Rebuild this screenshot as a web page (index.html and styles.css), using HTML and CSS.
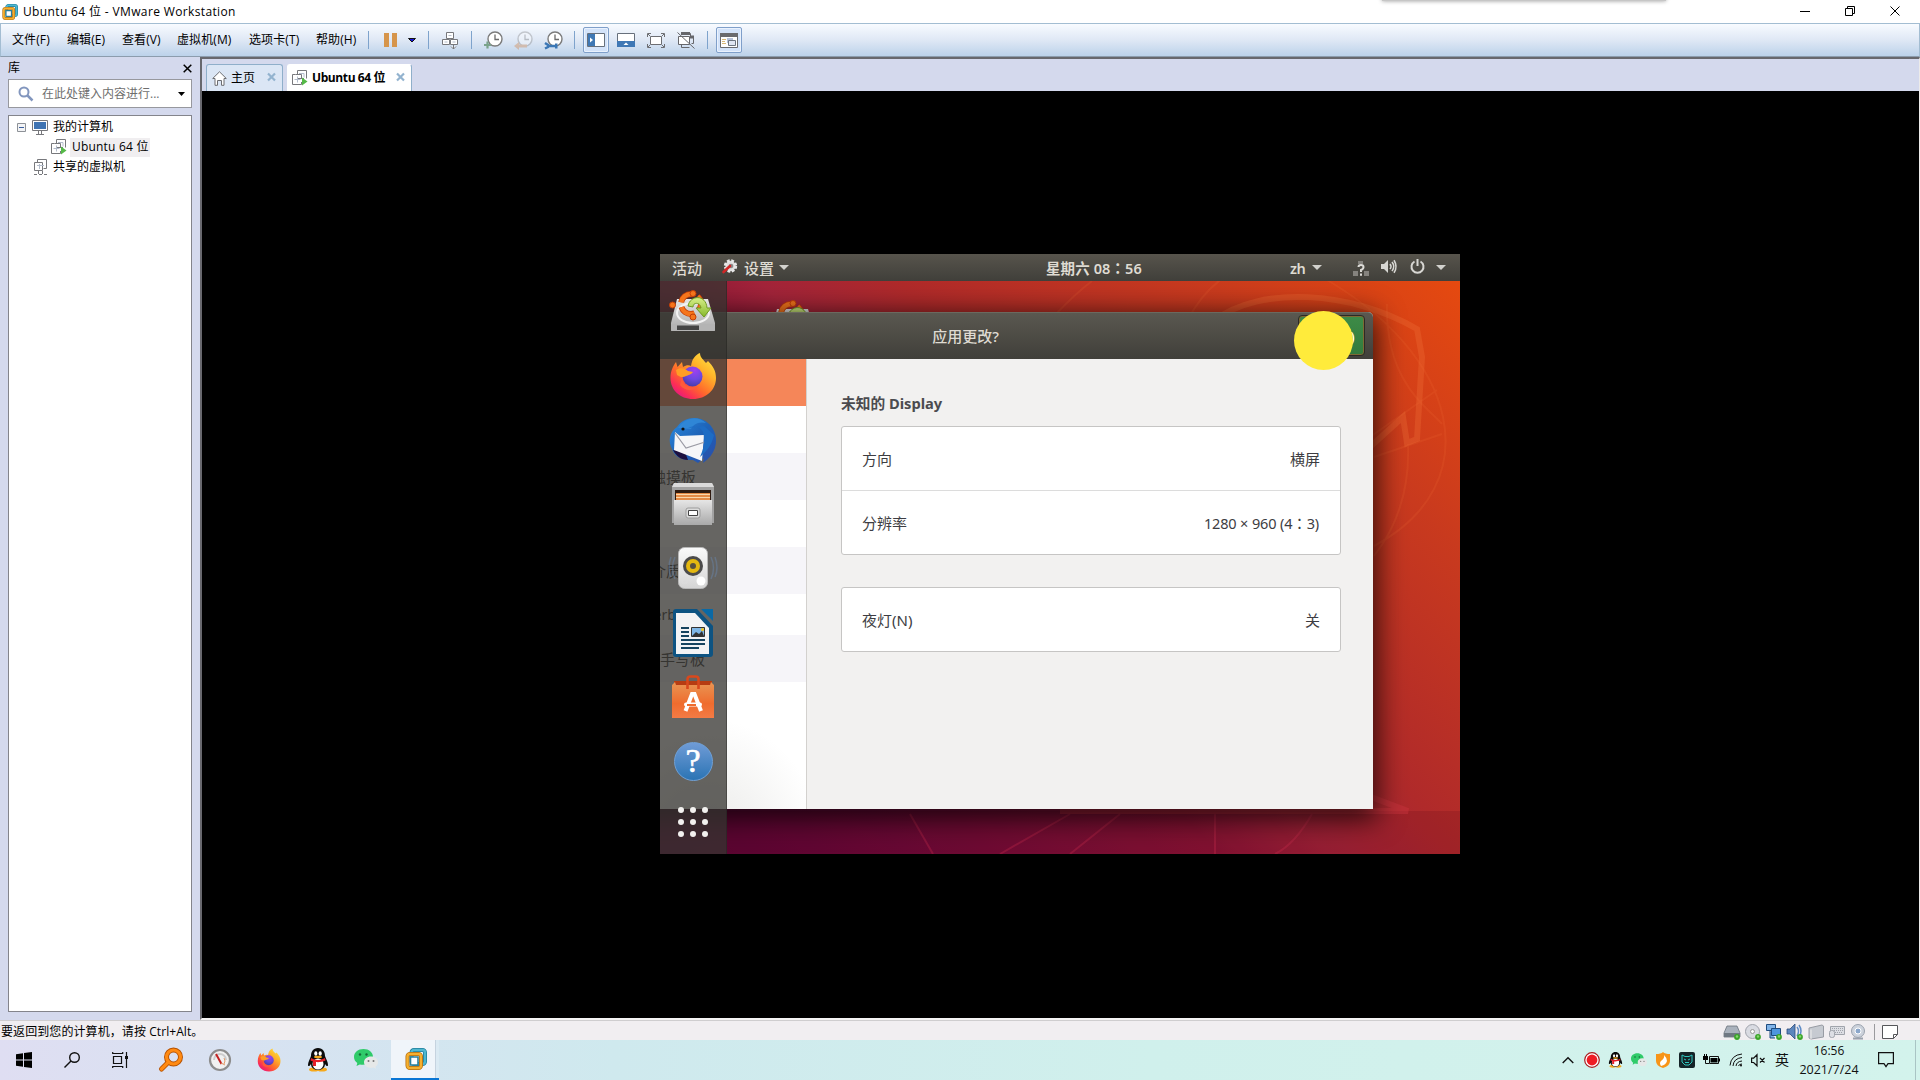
FILE: index.html
```html
<!DOCTYPE html>
<html lang="zh-CN">
<head>
<meta charset="utf-8">
<title>Ubuntu 64 位 - VMware Workstation</title>
<link rel="stylesheet" href="styles.css">
</head>
<body>
<svg class="defs" width="0" height="0" aria-hidden="true">
  <defs>
    <linearGradient id="g-metal" x1="0" y1="0" x2="0" y2="1"><stop offset="0" stop-color="#e6e6e6"/><stop offset="1" stop-color="#a9a9a9"/></linearGradient>
    <linearGradient id="g-fox" x1="1" y1="0" x2="0.2" y2="1"><stop offset="0" stop-color="#fff04a"/><stop offset=".35" stop-color="#ffb52a"/><stop offset=".65" stop-color="#ff6a2b"/><stop offset=".85" stop-color="#fb2f55"/><stop offset="1" stop-color="#e31587"/></linearGradient>
    <radialGradient id="g-globe" cx=".6" cy=".2" r=".9"><stop offset="0" stop-color="#a040f0"/><stop offset=".5" stop-color="#6c48e0"/><stop offset="1" stop-color="#403a9c"/></radialGradient>
    <linearGradient id="g-bird" x1="0" y1="0" x2="1" y2="1"><stop offset="0" stop-color="#2a8be0"/><stop offset=".5" stop-color="#1e63b8"/><stop offset="1" stop-color="#2b4da8"/></linearGradient>
    <linearGradient id="g-bag" x1="0" y1="0" x2="0" y2="1"><stop offset="0" stop-color="#e99654"/><stop offset=".6" stop-color="#ef6c2e"/><stop offset="1" stop-color="#f47b45"/></linearGradient>
    <linearGradient id="g-green" x1="0" y1="0" x2="0" y2="1"><stop offset="0" stop-color="#d8f08a"/><stop offset="1" stop-color="#86b92c"/></linearGradient>
    <linearGradient id="g-spk" x1="0" y1="0" x2="0" y2="1"><stop offset="0" stop-color="#fafafa"/><stop offset="1" stop-color="#d5d5d5"/></linearGradient>

    <symbol id="i-vmware" viewBox="0 0 22 22">
      <rect x="6.500" y="2" width="13.500" height="14" rx="2.500" fill="none" stroke="#1f7f9c" stroke-width="4"/>
      <rect x="6.500" y="2" width="13.500" height="14" rx="2.500" fill="none" stroke="#4fb7cf" stroke-width="2.400"/>
      <rect x="2.500" y="6" width="13.500" height="14" rx="2.500" fill="none" stroke="#b56d0e" stroke-width="4"/>
      <rect x="2.500" y="6" width="13.500" height="14" rx="2.500" fill="none" stroke="#f5b02e" stroke-width="2.400"/>
      <path d="M5.500 9h7.500v8H5.500z" fill="#fff" stroke="#2c7f99" stroke-width="1.600"/>
    </symbol>
    <symbol id="i-vm" viewBox="0 0 16 16">
      <path d="M5.500 4.500V.5h9v8M12 8.500H5.500" fill="none" stroke="#77787c"/>
      <path d="M3.500 4.500H.5v10h9V12M3.500 4.500h6v4" fill="none" stroke="#77787c"/>
      <path d="M7 3.500h5v4M2.500 9.500h6M5.500 6.500v6" fill="none" stroke="#b3bccb"/>
      <path d="M10 7.500l5.500 4-5.500 4z" fill="#55b948"/>
    </symbol>
    <symbol id="i-fox" viewBox="0 0 48 48">
      <path d="M24 47C11 47 1.500 38 1.500 26c0-7 2.500-12 5.500-16l1.500 5 4.500-5 1 5c3-2 6-2 8-1 1-7 4-11 9-13 0 5 4 7 6 10l2-2c5 5 8 10 8 17C47 38 37 47 24 47z" fill="url(#g-fox)"/>
      <circle cx="23.500" cy="24.500" r="10" fill="url(#g-globe)"/>
      <path d="M7 18c4-3 9-2 12 1l5 1c-2 3-5 3-7 4-3 2-6 1-9-1z" fill="#ff9d25"/>
      <path d="M13 25c0 9 9 13 17 9-4 5-14 6-19-1z" fill="#ff5b3a"/>
    </symbol>
    <symbol id="i-installer" viewBox="0 0 48 48">
      <path d="M8 12h31l7 24v7q0 1-1 1H3q-1 0-1-1v-7z" fill="url(#g-metal)"/>
      <path d="M2 37h44v6q0 1-1 1H3q-1 0-1-1z" fill="#b4b4b4"/><path d="M8 38.500h22v4.500H8z" fill="#444"/>
      <ellipse cx="24" cy="26" rx="16" ry="10" fill="none" stroke="#f3f3f3" stroke-width="2"/>
      <circle cx="22" cy="17" r="10" fill="none" stroke="#c33e06" stroke-width="6" stroke-dasharray="16 5" stroke-dashoffset="-12"/>
      <circle cx="22" cy="17" r="10" fill="none" stroke="#f5751c" stroke-width="4.500" stroke-dasharray="16 5" stroke-dashoffset="-12"/>
      <g fill="#f5751c" stroke="#c33e06"><circle cx="3.500" cy="18" r="3"/><circle cx="24" cy="6.500" r="3"/><circle cx="24" cy="30" r="3"/></g>
      <path d="M19 19c2-11 18-12 19 2h4l-7 9-8-9h5c-1-6-8-6-8-1z" fill="url(#g-green)" stroke="#6f9a20"/>
    </symbol>
    <symbol id="i-qq" viewBox="0 0 22 24">
      <ellipse cx="7" cy="21.500" rx="5" ry="2" fill="#f6a91c"/><ellipse cx="15" cy="21.500" rx="5" ry="2" fill="#f6a91c"/>
      <path d="M11 0c5 0 7 4 7 8 1 3 3 6 3 9 0 2-2 1-3-1 0 4-4 6-7 6s-7-2-7-6c-1 2-3 3-3 1 0-3 2-6 3-9 0-4 2-8 7-8z" fill="#0b0b0b"/>
      <ellipse cx="11" cy="16" rx="5.500" ry="5.500" fill="#fff"/>
      <ellipse cx="8.800" cy="5.500" rx="1.600" ry="2.300" fill="#fff"/><ellipse cx="13.200" cy="5.500" rx="1.600" ry="2.300" fill="#fff"/>
      <ellipse cx="11" cy="9" rx="4" ry="1.200" fill="#f6a91c"/>
      <path d="M4 10c4 2.500 10 2.500 14 0l.5 2.500c-3 1.500-7 2-9.500 1.600V18H6v-4.500l-2.500-1z" fill="#e5202b"/>
    </symbol>
    <symbol id="i-wechat" viewBox="0 0 24 20">
      <path d="M9.500 0C4 0 0 3.500 0 8c0 2.500 1.300 4.600 3.300 6L2.500 17l3.300-1.600C13 17 19 13 19 8c0-4.500-4-8-9.500-8z" fill="#2fcb6a"/>
      <circle cx="6" cy="5.500" r="1.200" fill="#146b38"/><circle cx="12.500" cy="5.500" r="1.200" fill="#146b38"/>
      <path d="M17 7.500c4 0 7 2.600 7 5.800 0 1.800-1 3.300-2.500 4.300l.5 2.200-2.500-1.200c-5 1.200-9.500-1.500-9.500-5.300 0-3.200 3-5.800 7-5.800z" fill="#e6e8e8"/>
      <circle cx="14.500" cy="12" r="1" fill="#777"/><circle cx="19.500" cy="12" r="1" fill="#777"/>
    </symbol>
    <symbol id="i-clock" viewBox="0 0 19 19">
      <circle cx="11" cy="8" r="7" fill="#fff" stroke="#7b7b7b" stroke-width="1.400"/><path d="M11 3.500V8.500h4" fill="none" stroke="#6c6c6c" stroke-width="1.300"/>
    </symbol>
    <symbol id="i-ok" viewBox="0 0 6 6"><circle cx="3" cy="3" r="2.900" fill="#3ba52a"/><circle cx="3" cy="2.500" r="1.200" fill="#86d66f"/></symbol>
  </defs>
</svg>

<header class="titlebar">
  <svg class="app-icon" width="16" height="16"><use href="#i-vmware"/></svg>
  <span class="app-title">Ubuntu 64 位 - VMware Workstation</span>
  <span class="top-strip"></span>
  <div class="win-buttons">
    <svg width="10" height="10"><path d="M0 5.500h10" stroke="#000"/></svg>
    <svg width="10" height="10"><path d="M.5 2.500h7v7h-7zM2.500 2.500v-2h7v7h-2" fill="none" stroke="#000"/></svg>
    <svg width="10" height="10"><path d="M.5.5l9 9M9.500.5l-9 9" stroke="#000"/></svg>
  </div>
</header>

<nav class="toolbar">
  <div class="menus">
    <span class="m2">文件(F)</span><span class="m2">编辑(E)</span><span class="m2">查看(V)</span><span class="m3">虚拟机(M)</span><span class="m4">选项卡(T)</span><span class="m2">帮助(H)</span>
  </div>
  <div class="tools">
    <i class="sep"></i>
    <svg class="pause" width="13" height="14"><path d="M0 0h5v14H0zM8 0h5v14H8z" fill="#d6954b"/></svg>
    <svg class="drop" width="8" height="5"><path d="M.5.5h7l-3.500 3.500z" fill="#1414d8" stroke="#111"/></svg>
    <i class="sep s1"></i>
    <svg class="t-cad" width="17" height="19" fill="#fff" stroke="#77787c"><path d="M4.500 1.500h7v6h-7zM.5 8.500h7v5h-7zM8.500 8.500h7v5h-7zM11.500 14v4M9 15.500l2.500 2.500 2.500-2.500"/><path d="M6.500 4.500h3M2.500 11h3M10.500 11h3" stroke="#b3bccb"/></svg>
    <i class="sep s2"></i>
    <svg class="t-clock" width="19" height="19"><use href="#i-clock"/><path d="M0 14h7M3.500 10.500v7" stroke="#7aa38b" stroke-width="2.200"/></svg>
    <svg class="t-clock" width="19" height="19"><g opacity=".35"><use href="#i-clock"/><path d="M13 15H4" stroke="#d07a38" stroke-width="3"/><path d="M0 15l5-4v8z" fill="#d07a38"/></g></svg>
    <svg class="t-clock" width="19" height="19"><use href="#i-clock"/><path d="M1 12l3 2v2l-3 1.500M4 15h8" stroke="#3b77b5" stroke-width="2.400" fill="none"/><path d="M11 12.500h2.500v5H11z" fill="#3b77b5"/></svg>
    <i class="sep s3"></i>
    <span class="toggle"><svg width="18" height="14"><path d="M.5.5h17v13H.5z" fill="#fff" stroke="#67707c"/><path d="M1 1h7v12H1z" fill="#3f78b5"/><path d="M3 4.500L6 7 3 9.500z" fill="#fff"/></svg></span>
    <svg class="t-a" width="18" height="14"><path d="M.5.5h17v13H.5z" fill="#fff" stroke="#67707c"/><path d="M0 8h18v6H0z" fill="#3f78b5"/><path d="M6.500 12L9 9.500l2.500 2.500z" fill="#fff"/></svg>
    <svg class="t-b" width="18" height="15" fill="none" stroke="#6d6e72"><path d="M3.500 3.500h11v8h-11z" fill="#fff"/><path d="M.5 4V.5H4M14 .5h3.500V4M17.500 11v3.500H14M4 14.500H.5V11M1 1l2 2M17 1l-2 2M1 14l2-2M17 14l-2-2"/></svg>
    <svg class="t-c" width="18" height="17" fill="none" stroke="#66676b"><path d="M5.500 1.500h8v3M13.500 4.500h3v7h-2M12.500 15.500h-8v-3" fill="none"/><path d="M1.500 4.500h11v8h-11z" fill="#fff"/><path d="M4 1.500h9M13 5h4" stroke-width="3"/><path d="M.5.500l17 16"/></svg>
    <i class="sep s4"></i>
    <span class="toggle"><svg width="18" height="15"><path d="M.5.5h17v14H.5z" fill="#fff" stroke="#6a6b6f"/><path d="M0 0h18v4H0z" fill="#6a6b6f"/><path d="M2 6.500h4M2 8.500h3M2 10.500h4" stroke="#d8b878"/><path d="M7 5h6v5H7z" fill="#b7c3dc"/><path d="M8.500 7.500h7v5h-7z" fill="#dfe5f2" stroke="#6d7580"/></svg></span>
  </div>
</nav>

<main class="workspace">
  <aside class="library">
    <div class="lib-head"><span>库</span><svg width="9" height="9"><path d="M.7.7l7.600 7.600M8.300.7L.7 8.300" stroke="#000" stroke-width="1.500"/></svg></div>
    <div class="search">
      <svg width="16" height="16"><circle cx="6" cy="6" r="4.500" fill="none" stroke="#8296be" stroke-width="2"/><path d="M9.500 9.500l5 5" stroke="#8296be" stroke-width="2.500"/></svg>
      <span>在此处键入内容进行...</span>
      <svg class="caret" width="7" height="4"><path d="M0 0h7L3.500 4z"/></svg>
    </div>
    <div class="tree">
      <div class="node n1"><svg class="exp" width="9" height="9"><path d="M.5.5h8v8h-8z" fill="#f3f4f6" stroke="#8d9197"/><path d="M2 4.500h5" stroke="#3a5f9e"/></svg><svg class="pc" width="16" height="15"><path d="M.5.5h15v10H.5z" fill="#fff" stroke="#77787c"/><path d="M2 2h12v7H2z" fill="#3f74b3"/><path d="M6.500 11v3M9.500 11v3M4 14.500h8" stroke="#77787c"/></svg><span>我的计算机</span></div>
      <div class="node n2"><svg width="16" height="16"><use href="#i-vm"/></svg><span class="sel">Ubuntu 64 位</span></div>
      <div class="node n3"><svg width="14" height="16" fill="none" stroke="#77787c"><path d="M3.500 3.500v-3h9v9h-3M.5 3.500h8v8h-8zM4.500 12v3M8.500 12v3M0 15.500h3M5 15.500h3M10 15.500h3"/><path d="M3 6.500h7M5.500 5v5" stroke="#b3bccb"/></svg><span>共享的虚拟机</span></div>
    </div>
  </aside>

  <section class="console">
    <div class="tabs">
      <div class="tab home"><svg width="15" height="15" fill="#fff" stroke="#6c6d71"><path d="M.7 7.500L7.500.8l6.800 6.700h-2.300v6.800H9.500V9.500h-4v4.800H3V7.500z"/></svg><span>主页</span><svg class="x" width="9" height="8"><path d="M1 .5l7 7M8 .5l-7 7" stroke="#93b3cf" stroke-width="2.200"/></svg></div>
      <div class="tab active"><svg width="16" height="16"><use href="#i-vm"/></svg><span>Ubuntu 64 位</span><svg class="x" width="9" height="8"><path d="M1 .5l7 7M8 .5l-7 7" stroke="#93b3cf" stroke-width="2.200"/></svg></div>
    </div>
    <div class="canvas">
      <div class="guest">
        <svg class="wall" width="800" height="600" fill="none" stroke="#f07038">
          <path d="M0 557h800v43H0z" fill="#500010" fill-opacity=".16" stroke="none"/>
          <g stroke-opacity=".32" stroke-width="6"><path d="M555 66C600 32 690 36 757 75L762 103 757 185 747 189 743 163 700 202"/></g>
          <path d="M690 535l58 22H400" stroke="#d03840" stroke-opacity=".4" stroke-width="6"/>
          <g stroke-opacity=".16" stroke-width="2"><path d="M660 22C800 100 830 230 714 292M727 50C725 130 770 155 782 170M714 203L782 180M748 190C750 240 735 275 714 302M777 136L700 190M528 66Q550 20 610 0M396 60Q415 40 432 27"/></g>
          <g stroke="#d03050" stroke-opacity=".3" stroke-width="2"><path d="M555 560v40M652 560Q635 590 615 600M250 560l23 40M460 560l-50 40M340 600l70-40"/></g>
        </svg>
        <svg class="desk-icon" width="48" height="48"><use href="#i-installer"/></svg>

        <div class="gwin">
          <div class="gwin-title"><span>应用更改?</span><button class="apply">应用(A)</button></div>
          <div class="gwin-body">
            <div class="glist">
              <div class="gr hot"></div>
              <div class="gr"></div>
              <div class="gr alt"><span class="e1">鼠标和触摸板</span></div>
              <div class="gr"></div>
              <div class="gr alt"><span class="e2">可移动介质</span></div>
              <div class="gr short"><span class="e3">Thunderbolt</span></div>
              <div class="gr alt"><span class="e4">Wacom 手写板</span></div>
              <div class="gr rest"></div>
            </div>
            <div class="gpanel">
              <h2>未知的 Display</h2>
              <div class="card"><div class="crow"><span>方向</span><span>横屏</span></div><div class="crow"><span>分辨率</span><span class="res">1280 × 960 (4<span class="colon" lang="ja">：</span>3)</span></div></div>
              <div class="card"><div class="crow"><span>夜灯(N)</span><span>关</span></div></div>
            </div>
          </div>
        </div>

        <div class="gtop">
          <span class="act">活动</span>
          <svg class="gear" width="16" height="15"><circle cx="8.500" cy="7" r="5.200" fill="#ddd" stroke="#e8e8e8" stroke-width="3" stroke-dasharray="2.600 1.500"/><circle cx="9" cy="7" r="2.300" fill="#8a8a88"/><path d="M1.500 13L8 7" stroke="#d02626" stroke-width="2.600" stroke-linecap="round"/></svg>
          <span class="appname">设置</span>
          <svg class="c1" width="10" height="5"><path d="M0 0h10L5 5z" fill="#d2d1cd"/></svg>
          <span class="gclock">星期六 08<span class="colon" lang="ja">：</span>56</span>
          <span class="zh">zh</span>
          <svg class="c2" width="10" height="5"><path d="M0 0h10L5 5z" fill="#d2d1cd"/></svg>
          <svg class="net" width="16" height="15"><path d="M5 0h5v3H5zM0 10h5v5H0zM11 10h5v5h-5z" fill="#85837e"/><path d="M5.500 6q0-2 2.500-2t2.500 2-2.500 3v2M8 12.500v2.200" fill="none" stroke="#dddcd8" stroke-width="2"/></svg>
          <svg class="vol" width="16" height="15" fill="none" stroke="#d8d7d3" stroke-width="1.600"><path d="M0 5h3l4-4v13L3 10H0z" fill="#d8d7d3" stroke="none"/><path d="M9 5q2 2.500 0 5M11 3q3.500 4.500 0 9M13 1.200q4 6.300 0 12.600"/></svg>
          <svg class="pow" width="15" height="15" fill="none" stroke="#d8d7d3" stroke-width="2"><path d="M4.500 2.500a6 6 0 1 0 6 0M7.500 0v7"/></svg>
          <svg class="c3" width="10" height="5"><path d="M0 0h10L5 5z" fill="#d2d1cd"/></svg>
        </div>

        <div class="dock">
          <div class="cell first"><svg width="48" height="48"><use href="#i-installer"/></svg></div>
          <div class="cell fox"><svg width="48" height="48"><use href="#i-fox"/></svg></div>
          <div class="cell"><svg width="50" height="50" viewBox="0 0 50 50"><path d="M9 11C17-1 38-2 46 15c5 11 1 24-11 32l1-5-6 5-5-3C12 45 6 39 4 33 0 25 1 17 9 11z" fill="url(#g-bird)"/><path d="M10 12C17 1 30-1 38 7c-8-2-13 2-15 6z" fill="#2f86d6"/><path d="M5 34l12 2 3 8c-7 0-12-4-15-10z" fill="#1c1040"/><path d="M7 16l5 4 24-1-2 26-28-11z" fill="#f6f6f8"/><path d="M7 17l11 15 19-6" fill="none" stroke="#9a9aa4" stroke-width="1.200"/><path d="M20 12c10-4 16 1 16 10 1 7-2 14-4 19 6-5 12-12 14-22l-10-9z" fill="#1d6cc4"/><circle cx="15" cy="13" r="1.600" fill="#111"/></svg></div>
          <div class="cell"><svg width="44" height="48" viewBox="0 0 44 48"><path d="M3 2h38l2 4v36H1V6z" fill="#a2a2a2"/><path d="M3 2h38l2 4H1z" fill="#dadada"/><path d="M4 9h36v12H4z" fill="#2f1a10"/><path d="M5 12h34v9H5z" fill="#e58a45"/><path d="M5 13.500h34M5 16.500h34" stroke="#fbd7ab" stroke-width="1.200"/><path d="M3 19h38v25H3z" fill="url(#g-metal)"/><rect x="15" y="27" width="14" height="10" rx="2" fill="#dcdcdc" stroke="#9c9c9c"/><path d="M17.500 29.500h9v5h-9z" fill="#fff" stroke="#444"/></svg></div>
          <div class="cell"><svg width="48" height="48" viewBox="0 0 48 48"><path d="M6 12q-5 11 0 22M2 12q-4 11 0 20M42 12q5 11 0 22M46 12q4 11 0 20" fill="none" stroke="#6a8cb8" stroke-opacity=".4" stroke-width="1.500"/><rect x="9.500" y="2.500" width="29" height="41" rx="6" fill="url(#g-spk)" stroke="#b8b8b8"/><circle cx="24" cy="21" r="10" fill="#4b4b4b"/><circle cx="24" cy="21" r="7" fill="#e4b810"/><circle cx="24" cy="21" r="3" fill="#575040"/><circle cx="32" cy="36" r="4.500" fill="#fff"/><path d="M13 33h5v5h-5z" fill="none" stroke="#ddd"/></svg></div>
          <div class="cell"><svg width="40" height="48" viewBox="0 0 40 48"><path d="M3 0h21l16 17v28q0 3-3 3H3q-3 0-3-3V3q0-3 3-3z" fill="#0d5382"/><path d="M28 0h12v12z" fill="#0a69a5"/><path d="M3 4h19l14 15v26H3z" fill="#f2f3f5"/><path d="M8 19h8M8 23h8M8 27h8M8 31h24M8 35h24M8 39h18" stroke="#15435f" stroke-width="2"/><path d="M18.500 18.500h13v9h-13z" fill="#7eb6e6" stroke="#333"/><path d="M19 27l4-4 3 2 3-3 2 5z" fill="#333"/><circle cx="29.500" cy="20.500" r="1.500" fill="#f5c518"/></svg></div>
          <div class="cell bag"><svg width="42" height="46" viewBox="0 0 42 46"><path d="M2 8h38v6H2z" fill="#b63c12"/><path d="M0 12l3-3 1 3h34l1-3 3 3v33H0z" fill="url(#g-bag)"/><path d="M15.500 16V6q0-2.500 3-2.500h5q3 0 3 2.500v10" fill="none" stroke="#d9481c" stroke-width="2.600"/><path d="M13.500 38L20 21h2.500L29 38" fill="none" stroke="#fff" stroke-width="4"/><path d="M14 31.500h14" stroke="#fff" stroke-width="4" stroke-linecap="round"/><path d="M15 32h9" stroke="#ef6c2e" stroke-width="2"/></svg></div>
          <div class="cell"><span class="help">?</span></div>
          <div class="cell apps"><svg width="30" height="30" fill="#f2f1ef"><circle cx="3" cy="3" r="3"/><circle cx="15" cy="3" r="3"/><circle cx="27" cy="3" r="3"/><circle cx="3" cy="15" r="3"/><circle cx="15" cy="15" r="3"/><circle cx="27" cy="15" r="3"/><circle cx="3" cy="27" r="3"/><circle cx="15" cy="27" r="3"/><circle cx="27" cy="27" r="3"/></svg></div>
        </div>
        <span class="pointer-halo"></span>
      </div>
    </div>
  </section>
</main>

<footer class="status">
  <span class="hint">要返回到您的计算机，请按 Ctrl+Alt。</span>
  <div class="devices">
    <svg width="16" height="16"><path d="M3 2h10l3 7v4H0V9z" fill="#aab2bd" stroke="#6a727c" stroke-width=".8"/><path d="M0 9h16v4H0z" fill="#6f7882"/><use href="#i-ok" x="10" y="10" width="6" height="6"/></svg>
    <svg width="16" height="16"><circle cx="7.500" cy="7.500" r="7" fill="#d9dbe2" stroke="#a0a3ac"/><circle cx="7.500" cy="7.500" r="2" fill="#fff" stroke="#999"/><use href="#i-ok" x="10" y="10" width="6" height="6"/></svg>
    <svg width="16" height="16" stroke="#1e4c80"><path d="M.5.5h9v6h-9zM4 7v7h5" fill="#7fb3e8"/><path d="M5.500 4.500h9v7h-9z" fill="#4d96de"/><use href="#i-ok" x="10" y="10" width="6" height="6" stroke="none"/></svg>
    <svg width="16" height="16"><path d="M0 5h3l5-5v15l-5-5H0z" fill="#5c86bd" stroke="#2d4d7c" stroke-width=".8"/><path d="M10 3q3 4 0 9M12 1q4 6 0 12" fill="none" stroke="#5f8cc6" stroke-width="1.500"/><use href="#i-ok" x="10" y="10" width="6" height="6"/></svg>
    <svg width="16" height="16"><path d="M1 4l13-3 1.500 1v11L3 15l-2-1z" fill="#c6cad1" stroke="#989ca4"/><path d="M3 5.500V15" stroke="#eee"/></svg>
    <svg width="16" height="16" fill="#dcdee4" stroke="#a0a4ac"><path d="M1.500 2.500h14v8h-14z"/><path d="M3 4.500h11M3 6.500h11M6 8.500h8" stroke-dasharray="1 1"/><rect x=".5" y="6.500" width="5" height="7" rx="2"/></svg>
    <svg width="16" height="16"><circle cx="8" cy="7" r="6.500" fill="#ccd2dc" stroke="#9aa2ae"/><circle cx="8" cy="7" r="3" fill="#8ba7cb" stroke="#fff"/><path d="M3 14.500h10" stroke="#9aa2ae" stroke-width="2"/></svg>
    <i class="dsep"></i>
    <svg width="16" height="16"><path d="M.5 1.500h15v9l-4 4H.5zM11.500 14.500v-4h4" fill="#fff" stroke="#55565a"/></svg>
  </div>
</footer>

<footer class="taskbar">
  <div class="pins">
    <svg class="p0" width="16" height="16"><path d="M0 2.200L7 1.200V7.500H0zM8 1l8-1v7.500H8zM0 8.500h7v6.300l-7-1zM8 8.500h8V16l-8-1z"/></svg>
    <svg class="p1" width="16" height="16" fill="none" stroke="#111" stroke-width="1.400"><circle cx="10.500" cy="5.500" r="4.800"/><path d="M7 9L.5 15.500"/></svg>
    <svg class="p2" width="16" height="16" fill="none" stroke="#111" stroke-width="1.200"><path d="M1.500 4.500h8v7h-8zM.7 0v1.500h10V0M.7 16v-1.500h10V16M14.500 0v16"/><path d="M13 4h3v3h-3z" fill="#111" stroke="none"/></svg>
    <svg class="p3" width="24" height="24" fill="none"><circle cx="14.500" cy="9" r="7" stroke="#b75200" stroke-width="5"/><path d="M9.500 14L2.500 21" stroke="#b75200" stroke-width="5" stroke-linecap="round"/><circle cx="14.500" cy="9" r="7" stroke="#ff8a12" stroke-width="3.200"/><path d="M9.500 14L2.500 21" stroke="#ff8a12" stroke-width="3.200" stroke-linecap="round"/></svg>
    <svg class="p4" width="24" height="24"><circle cx="12" cy="12" r="10" fill="#f1f1f1" stroke="#8d8d8d" stroke-width="2.200"/><path d="M6 12a6 6 0 0 1 12 0" fill="none" stroke="#ccc" stroke-width="2"/><path d="M8 6l5.500 10" stroke="#c42222" stroke-width="2"/><path d="M16 10q2 3 0 6M13 15l4 2" stroke="#e39a6a" fill="none"/></svg>
    <svg class="p5" width="24" height="24"><use href="#i-fox"/></svg>
    <svg class="p6" width="22" height="24"><use href="#i-qq"/></svg>
    <svg class="p7" width="24" height="20"><use href="#i-wechat"/></svg>
    <span class="running"><svg width="22" height="22"><use href="#i-vmware"/></svg></span>
  </div>
  <div class="tray">
    <svg class="y0" width="12" height="8"><path d="M.7 7L6 1.700 11.300 7" fill="none" stroke="#111" stroke-width="1.400"/></svg>
    <svg class="y1" width="16" height="16"><circle cx="8" cy="8" r="7.300" fill="#fff" stroke="#a81c20" stroke-width="1.200"/><circle cx="8" cy="8" r="5.400" fill="#ee1c24"/></svg>
    <svg class="y2" width="15" height="16"><use href="#i-qq"/></svg>
    <svg class="y3" width="16" height="14"><use href="#i-wechat"/></svg>
    <svg class="y4" width="14" height="16"><path d="M0 2q5 0 7-2 2 2 7 2v7q0 5-7 7-7-2-7-7z" fill="#f79518"/><path d="M8 3q1 3-3 6-2 2 0 5 5-1 6-5 0-3-3-6z" fill="#fff"/></svg>
    <svg class="y5" width="16" height="16" fill="none" stroke="#2ec6bd"><rect width="16" height="16" rx="2" fill="#152428" stroke="none"/><path d="M3 3l3 1.500h4L13 3v7l-3 3H6l-3-3zM5 7l2 1M11 7L9 8M6 10.500h4"/></svg>
    <svg class="y6" width="17" height="12"><path d="M6.500 2.500h9v7h-9z" fill="none" stroke="#111"/><path d="M7.500 4h7v4.500h-7zM16 4.500h1v3h-1zM0 2h5v4H0zM1 0h1v2H1zM3 0h1v2H3z"/><path d="M2.500 5v4.500H6" stroke="#111" fill="none"/></svg>
    <svg class="y7" width="14" height="14" fill="none" stroke="#111"><path d="M1 12.500Q2 2 13 1M4 13Q4.500 5.500 13 4.500M7 13Q7.500 8.500 13 8M9.500 13Q10 11 13 11"/><circle cx="12" cy="12.500" r="1" fill="#111" stroke="none"/></svg>
    <svg class="y8" width="15" height="13" fill="none" stroke="#111" stroke-width="1.200"><path d="M.6 4.200h2L6 .8v11L2.600 8.500h-2zM9 4l4.500 4.500M13.500 4L9 8.500"/></svg>
    <span class="ime">英</span>
    <span class="when"><b>16:56</b><b class="date">2021/7/24</b></span>
    <svg class="y9" width="16" height="16"><path d="M.6.600h14.800v11H10l-2 3-2-3H.6z" fill="none" stroke="#111" stroke-width="1.200"/></svg>
    <i class="peek"></i>
  </div>
</footer>
</body>
</html>
```

FILE: styles.css
```css
* { box-sizing: border-box; }
body { margin: 0; width: 1920px; height: 1080px; overflow: hidden; display: flex; flex-direction: column; font: 12px/16px "Open Sans", "Noto Sans CJK SC", sans-serif; color: #111; background: #fff; }
svg { display: block; flex: none; overflow: visible; }
i { display: block; flex: none; }
span { white-space: nowrap; }
.defs { position: absolute; }
.colon { font-family: "Noto Sans CJK JP", sans-serif; }

/* title bar */
.titlebar { height: 23px; flex: none; display: flex; align-items: center; position: relative; padding-left: 2px; background: #fff; }
.app-title { margin-left: 5px; letter-spacing: .36px; color: #000; }
.top-strip { position: absolute; left: 1382px; top: -8px; width: 284px; height: 9px; background: #c6c6c6; box-shadow: 0 0 4px #999; }
.win-buttons { margin-left: auto; display: flex; gap: 35px; padding: 0 20px 2px 0; }

/* menu and tool bar */
.toolbar { height: 34px; flex: none; display: flex; align-items: center; border: 1px solid #a3bdd2; border-bottom-color: #8c9cad; background: linear-gradient(#f8fbff, #dfe8f5 50%, #bcd2ea); }
.menus { display: flex; padding-left: 11px; width: 367px; color: #000; }
.menus span { letter-spacing: .1px; }
.m2 { width: 55px; flex: none; }
.m3 { width: 72px; flex: none; }
.m4 { width: 67px; flex: none; }
.tools { display: flex; align-items: center; }
.sep { width: 1px; height: 18px; background: #7ea3cc; }
.pause { margin-left: 15px; }
.drop { margin-left: 11px; }
.s1 { margin-left: 12px; }
.t-cad { margin-left: 13px; }
.s2 { margin-left: 12px; }
.t-clock { margin-left: 12px; margin-right: -1px; }
.t-clock + .t-clock { margin-left: 12px; }
.s3 { margin-left: 12px; }
.toggle { width: 26px; height: 26px; margin-left: 8px; display: flex; align-items: center; justify-content: center; border: 1px solid #7f9fca; border-radius: 2px; background: #d3e3fa; box-shadow: inset 0 0 0 1px #eaf2fd; }
.t-a { margin-left: 8px; }
.t-b, .t-c { margin-left: 12px; }
.s4 { margin-left: 12px; }

/* library */
.workspace { height: 963px; flex: none; display: flex; }
.library { width: 200px; flex: none; background: #d4d9ed; padding: 0 8px 8px; display: flex; flex-direction: column; }
.lib-head { height: 22px; display: flex; align-items: center; justify-content: space-between; color: #000; }
.search { height: 29px; display: flex; align-items: center; background: #fff; border: 1px solid #97989e; padding: 0 6px 0 9px; color: #6e6e6e; }
.search span { margin-left: 8px; }
.caret { margin-left: auto; }
.tree { flex: 1; margin-top: 7px; background: #fff; border: 1px solid #83848b; padding-top: 1px; color: #000; }
.node { height: 20px; display: flex; align-items: center; }
.n1 { padding-left: 8px; }
.pc { margin: 0 5px 0 6px; }
.n2 { padding-left: 42px; }
.sel { height: 19px; line-height: 18px; margin-left: 3px; padding: 0 2px; width: 80px; background: #f0eef0; letter-spacing: .2px; }
.n3 { padding-left: 25px; }
.n3 span { margin-left: 5px; }

/* tabs and VM canvas */
.console { flex: 1; display: flex; flex-direction: column; border: solid #68686e; border-width: 2px 1px 2px 2px; border-right-color: #ecebea; border-bottom-color: #f5f4f4; }
.tabs { height: 32px; flex: none; display: flex; align-items: flex-end; gap: 4px; padding-left: 4px; background: #d4d9ed; }
.tab { height: 27px; display: flex; align-items: center; border: 1px solid #8fafca; border-bottom: 0; border-radius: 3px 3px 0 0; padding: 0 6px 0 5px; color: #000; }
.tab .x { margin-left: auto; margin-bottom: 2px; }
.home { width: 77px; background: #dbe6f5; }
.home span { margin-left: 4px; }
.active { width: 125px; background: #fff; border-color: #fff; border-right-color: #8fafca; font-weight: 700; padding-left: 4px; }
.active span { margin-left: 4px; letter-spacing: -.4px; }
.canvas { flex: 1; background: #000; display: flex; align-items: center; justify-content: center; padding: 0 1px 1px 0; }

/* guest desktop */
.guest { width: 800px; height: 600px; flex: none; position: relative; overflow: hidden; font: 15px/20px "Noto Sans", "Noto Sans CJK SC", sans-serif; background: linear-gradient(45deg, #560435 0%, #6c0a3a 18%, #8a1536 40%, #a3243a 48%, #b02a2a 58%, #c93a1e 79%, #e84b0e 100%); }
.wall { position: absolute; left: 0; top: 0; }
.desk-icon { position: absolute; left: 109px; top: 43px; }
.gtop { position: absolute; left: 0; top: 0; width: 800px; height: 27px; display: flex; align-items: center; padding: 1px 0 0 12px; background: linear-gradient(#57544c, #403f3a); color: #dfdbd2; font-weight: 500; }
.gear { margin: -3px 0 0 20px; }
.appname { margin-left: 6px; }
.c1 { margin-left: 5px; margin-top: -2px; }
.act, .appname { width: 30px; }
.gclock { margin-left: 257px; width: 97px; font-weight: 600; font-size: 14.500px; letter-spacing: .1px; }
.zh { margin-left: 147px; width: 16px; font-size: 14.500px; font-weight: 600; letter-spacing: -.4px; }
.c2 { margin-left: 6px; }
.net { margin-left: 31px; }
.vol { margin-left: 12px; margin-top: -3px; }
.pow { margin-left: 13px; margin-top: -3px; }
.c3 { margin-left: 11px; }
.c2, .c3 { margin-top: -2px; }
.gwin { position: absolute; left: -100px; top: 58px; width: 813px; height: 497px; border-radius: 5px 5px 0 0; box-shadow: 0 6px 28px 4px rgba(0, 0, 0, .75); background: #f2f1f0; }
.gwin-title { height: 47px; display: flex; align-items: center; justify-content: center; position: relative; border-radius: 5px 5px 0 0; border-top: 1px solid #6b695f; background: linear-gradient(#5a5850, #403f3a); color: #dfdbd2; font-weight: 500; }
.gwin-title span { margin-left: -2px; }
.apply { position: absolute; right: 8px; top: 2px; width: 67px; height: 41px; border: 1px solid #2c2a26; border-radius: 4px; background: linear-gradient(#3d8b47, #337a3d); box-shadow: inset 0 0 0 1px #7d6a34; color: #fff; font: inherit; padding: 0 3px 0 0; }
.gwin-body { display: flex; height: 450px; }
.glist { width: 247px; flex: none; border-right: 1px solid #d3d1ce; background: #fff; color: #333; }
.gr { height: 47px; display: flex; align-items: center; justify-content: flex-end; background: #fff; }
.hot { background: #f58659; }
.alt { background: #f6f5f9; }
.short { height: 41px; }
.rest { height: 127px; background: radial-gradient(ellipse at 60% 130%, #e8e8e6 0%, #fff 55%); }
.e1 { margin-right: 110px; }
.e2 { margin-right: 125px; }
.e3 { margin-right: 113px; font-size: 14px; }
.e4 { margin-right: 101px; }
.gpanel { flex: 1; padding: 34px 32px 0 34px; color: #3d3d42; }
.gpanel h2 { margin: 0 0 13px; font: inherit; font-weight: 700; font-size: 14.700px; line-height: 20px; color: #4b4b4f; }
.card { border: 1px solid #c6c5c4; border-radius: 3px; background: #fff; margin-bottom: 32px; }
.crow { height: 63px; display: flex; align-items: center; justify-content: space-between; padding: 0 20px; }
.crow + .crow { border-top: 1px solid #dcdcdc; height: 64px; }
.res { font-size: 14.500px; letter-spacing: -.15px; padding-right: 1px; }
.dock { position: absolute; left: 0; top: 27px; width: 67px; height: 573px; background: rgba(54, 52, 48, .76); border-right: 1px solid rgba(30, 28, 26, .35); }
.cell { height: 64px; display: flex; align-items: center; justify-content: center; }
.first { padding-bottom: 5px; }
.fox { padding-bottom: 2px; }
.bag { padding-bottom: 2px; }
.apps { margin-top: -3px; }
.help { width: 39px; height: 39px; border-radius: 50%; background: linear-gradient(#6f9bd6, #2b74b4); border: 1px solid #6fa0d6; color: #fff; font: 34px/36px "Liberation Serif", serif; text-align: center; -webkit-text-stroke: .6px #fff; }
.pointer-halo { position: absolute; left: 634px; top: 57px; width: 59px; height: 59px; border-radius: 50%; background: #ffeb3b; }

/* status bar */
.status { height: 20px; flex: none; display: flex; align-items: center; border-top: 1px solid #cfcdcf; background: #f1eef1; padding: 2px 22px 0 1px; color: #000; }
.hint { letter-spacing: .08px; }
.devices { margin-left: auto; display: flex; gap: 5px; }
.dsep { width: 1px; height: 16px; margin: 0 2px 0 3px; background: #9a9a9e; }

/* taskbar */
.taskbar { height: 40px; flex: none; display: flex; justify-content: space-between; background: linear-gradient(90deg, #dfdef2, #d6e3f1 16%, #cfe9ee 32%, #d0f0ec 60%, #d3f3ec); color: #111; }
.pins, .tray { display: flex; align-items: center; }
.p0 { margin-left: 16px; }
.p1, .p2 { margin-left: 32px; }
.p3 { margin-left: 31px; }
.p4 { margin-left: 25px; }
.p5 { margin-left: 25px; }
.p6 { margin-left: 26px; }
.p7 { margin-left: 25px; margin-top: -2px; }
.running { margin-left: 13px; width: 48px; height: 40px; display: flex; align-items: center; padding-left: 14px; background: linear-gradient(90deg, #f0f5fa 44px, #c6d3df 44px, #c6d3df 45px, #dbeaf3 45px); border-bottom: 2px solid #0a76d4; }
.y1 { margin-left: 10px; }
.y2, .y3 { margin-left: 8px; }
.y4, .y5 { margin-left: 9px; }
.y6 { margin-left: 8px; }
.y7 { margin-left: 9px; }
.y8 { margin-left: 8px; }
.ime { margin-left: 9px; width: 14px; font-size: 14px; }
.when { width: 62px; margin-left: 9px; display: flex; flex-direction: column; align-items: center; line-height: 19px; }
.when b { font-weight: 400; letter-spacing: 0; }
.date { font-size: 12.500px; }
.y9 { margin-left: 18px; }
.peek { width: 1px; height: 40px; margin: 0 4px 0 21px; background: #a9c4c4; }
```
